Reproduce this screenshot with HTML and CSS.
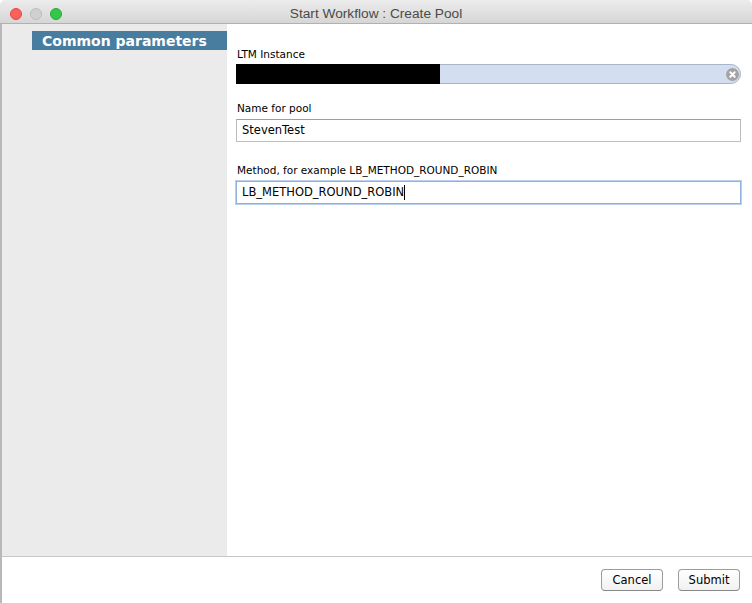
FILE: index.html
```html
<!DOCTYPE html>
<html>
<head>
<meta charset="utf-8">
<link rel="stylesheet" href="styles.css">
</head>
<body>
<div class="window">
  <div class="titlebar">
    <div class="lights">
      <span class="light red"></span>
      <span class="light gray"></span>
      <span class="light green"></span>
    </div>
    <div class="title">Start Workflow : Create Pool</div>
  </div>
  <div class="main">
    <div class="sidebar">
      <div class="side-header">Common parameters</div>
    </div>
    <div class="content">
      <div class="field field-ltm">
        <div class="label">LTM Instance</div>
        <div class="select">
          <div class="redact"></div>
          <span class="clear"><svg width="13" height="13" viewBox="0 0 13 13"><circle cx="6.5" cy="6.5" r="6.5" fill="#a3a3a3"/><path d="M4.3 4.3 L8.7 8.7 M8.7 4.3 L4.3 8.7" stroke="#fff" stroke-width="2" stroke-linecap="round"/></svg></span>
        </div>
      </div>
      <div class="field field-name">
        <div class="label">Name for pool</div>
        <div class="input">StevenTest</div>
      </div>
      <div class="field field-method">
        <div class="label">Method, for example LB_METHOD_ROUND_ROBIN</div>
        <div class="input focused">LB_METHOD_ROUND_ROBIN<span class="caret"></span></div>
      </div>
    </div>
  </div>
  <div class="footer">
    <button class="btn">Cancel</button>
    <button class="btn">Submit</button>
  </div>
</div>
</body>
</html>
```
FILE: styles.css
```css
html, body {
  margin: 0;
  padding: 0;
  background: #ffffff;
}
.window {
  width: 752px;
  height: 603px;
  display: flex;
  flex-direction: column;
  font-family: "DejaVu Sans", sans-serif;
  overflow: hidden;
}
.titlebar {
  height: 23px;
  border-bottom: 1px solid #b1b1b1;
  background: linear-gradient(#ececec, #d6d6d6);
  border-top-left-radius: 5px;
  border-top-right-radius: 5px;
  position: relative;
  display: flex;
  align-items: center;
  justify-content: center;
}
.lights {
  position: absolute;
  left: 10px;
  top: 8px;
  display: flex;
  gap: 8px;
}
.light {
  width: 12px;
  height: 12px;
  border-radius: 50%;
  box-sizing: border-box;
}
.red { background: #fc605b; border: 1px solid #de4a45; }
.gray { background: #d0d0d0; border: 1px solid #bdbdbd; }
.green { background: #34c84a; border: 1px solid #27aa36; }
.title {
  font-family: "Liberation Sans", Arial, sans-serif;
  font-size: 13.7px;
  color: #4a4a4a;
  margin-top: 3px;
}
.main {
  flex: 1;
  display: flex;
  border-left: 2px solid #b8b8b8;
}
.sidebar {
  width: 225px;
  background: #ebebeb;
  padding-top: 7px;
}
.side-header {
  margin-left: 30px;
  height: 19px;
  background: #497d9f;
  color: #ffffff;
  font-weight: bold;
  font-size: 14px;
  line-height: 20px;
  padding-left: 10px;
}
.content {
  flex: 1;
  padding: 24px 11px 0 9px;
  display: flex;
  flex-direction: column;
}
.field {
  display: flex;
  flex-direction: column;
}
.label {
  font-size: 10.5px;
  color: #000;
  line-height: 13px;
  margin-left: 1px;
  margin-bottom: 4px;
}
.field-ltm .label {
  margin-bottom: 3px;
}
.field-name {
  margin-top: 18px;
}
.field-method {
  margin-top: 22px;
}
.select {
  height: 18px;
  background: #d3dff0;
  border: 1px solid #a8b6cc;
  border-radius: 0 10px 10px 0;
  display: flex;
  align-items: center;
  justify-content: space-between;
}
.redact {
  width: 204px;
  height: 20px;
  margin: -1px 0 -1px -1px;
  background: #000;
}
.clear {
  display: flex;
  margin-right: 1px;
}
.input {
  height: 21px;
  border: 1px solid #bdbdbd;
  border-top-color: #9e9e9e;
  background: #fff;
  font-size: 11.5px;
  line-height: 21px;
  padding-left: 5px;
  display: flex;
  align-items: center;
}
.input.focused {
  border: 1px solid #8fb2dc;
  box-shadow: 0 0 0 1px #b9d1ee;
}
.caret {
  display: inline-block;
  width: 1px;
  height: 15px;
  background: #000;
}
.footer {
  height: 47px;
  border-top: 1px solid #c6c6c6;
  border-left: 2px solid #b8b8b8;
  display: flex;
  justify-content: flex-end;
  align-items: flex-start;
  padding-top: 12px;
  padding-right: 12px;
  gap: 15px;
  box-sizing: border-box;
}
.btn {
  width: 62px;
  height: 22px;
  border: 1px solid #9c9c9c;
  border-bottom-color: #888;
  border-radius: 4px;
  background: linear-gradient(#ffffff, #f1f1f1);
  font-family: "DejaVu Sans", sans-serif;
  font-size: 11.5px;
  color: #000;
  padding: 0;
}
```
